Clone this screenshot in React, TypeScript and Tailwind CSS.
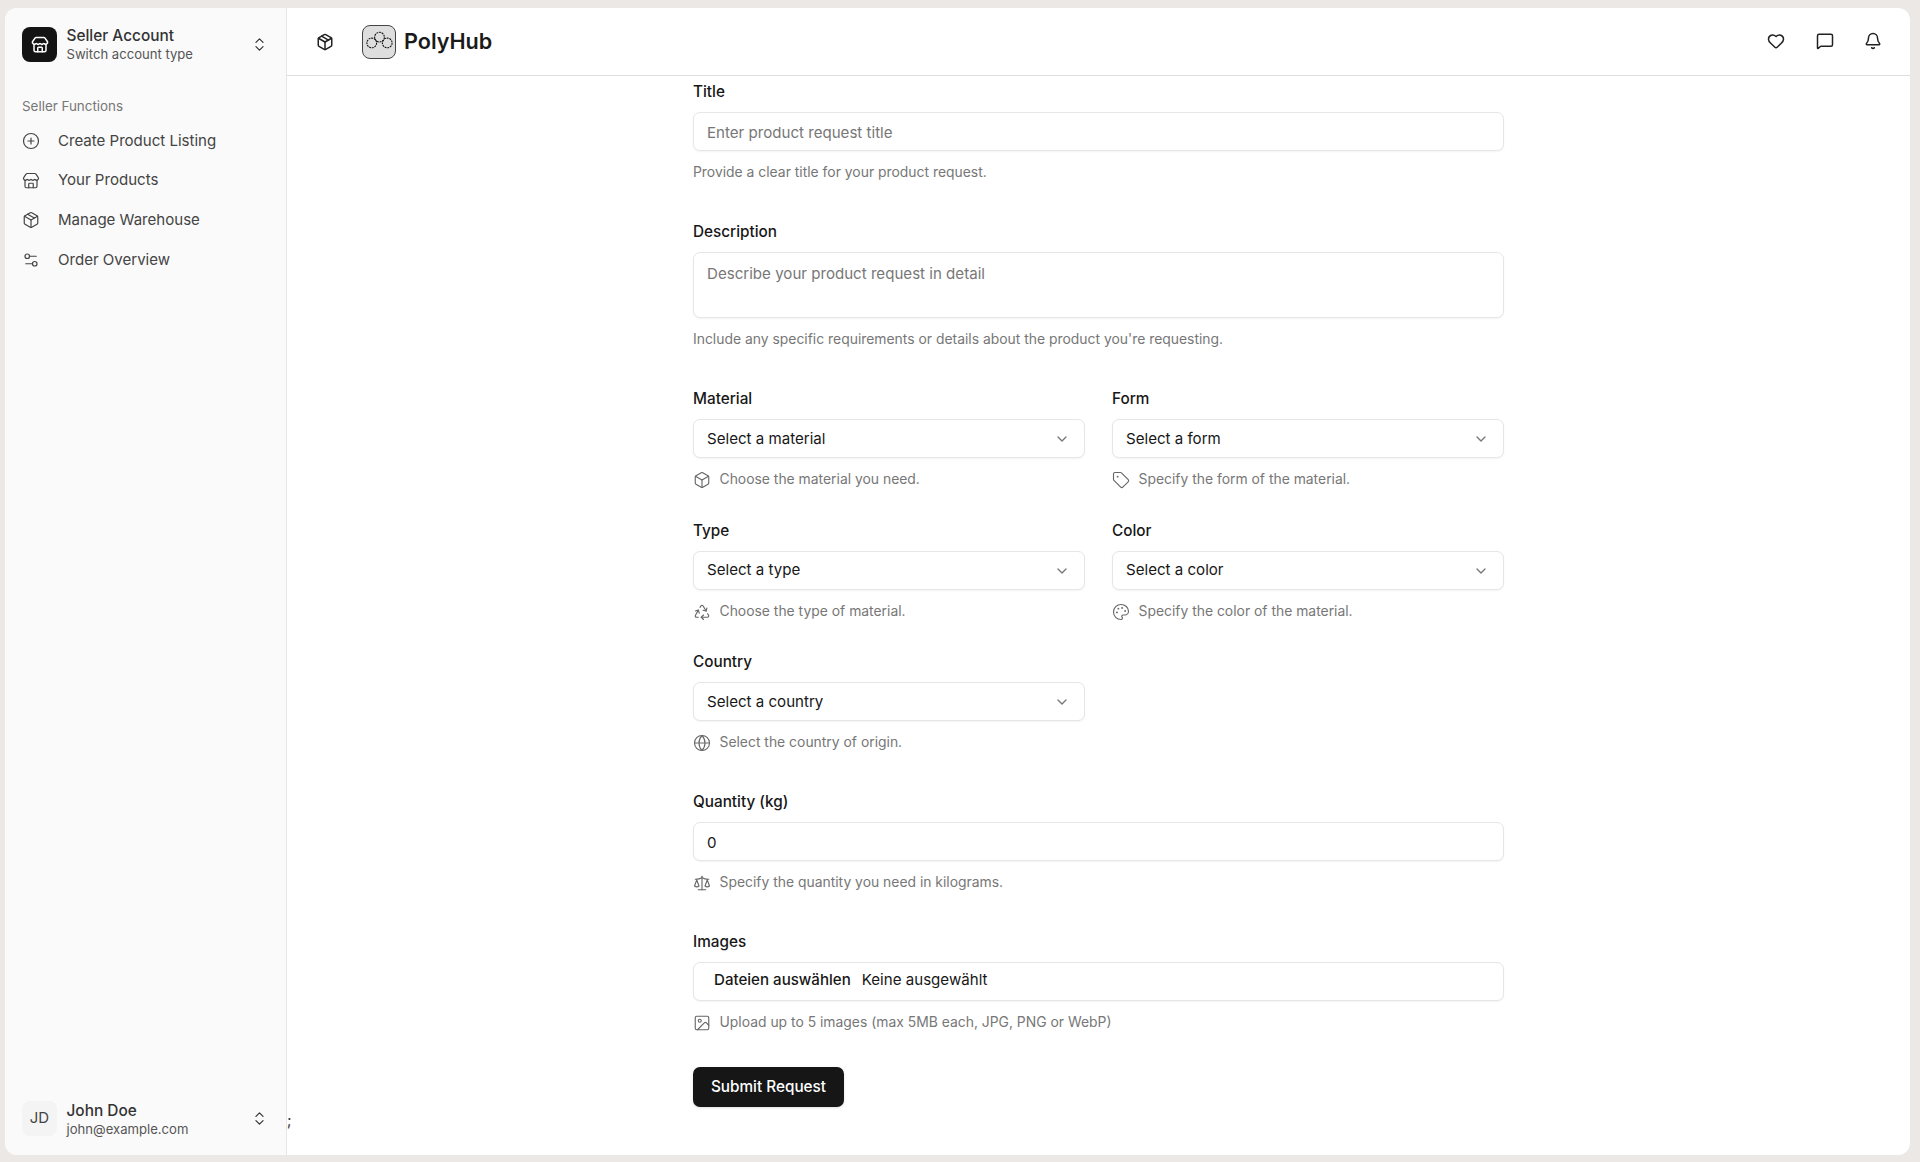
import type { ReactNode } from "react";
import {
  Bell,
  Box,
  ChevronDown,
  ChevronsUpDown,
  CirclePlus,
  Globe,
  Heart,
  Image,
  MessageSquare,
  Package,
  Palette,
  Recycle,
  Scale,
  Settings2,
  Store,
  Tag,
} from "lucide-react";

const NAV = [
  { label: "Create Product Listing", icon: CirclePlus },
  { label: "Your Products", icon: Store },
  { label: "Manage Warehouse", icon: Package },
  { label: "Order Overview", icon: Settings2 },
];

function Logo() {
  return (
    <div className="flex h-[34px] w-[34px] items-center justify-center rounded-[8px] border border-[#444] bg-[#dedede]">
      <svg viewBox="0 0 32 32" className="h-[31px] w-[31px]" fill="none" stroke="#111" strokeWidth="1.1" strokeDasharray="2 0.8">
        <circle cx="8" cy="17.5" r="5" />
        <circle cx="16" cy="11.5" r="5" />
        <circle cx="24" cy="17.5" r="5" />
      </svg>
    </div>
  );
}

function Sidebar() {
  return (
    <aside className="flex w-[282px] shrink-0 flex-col border-r border-[#e8e5e3] bg-[#fafafa]">
      <div className="flex items-center pl-[17px] pr-[18px] pt-[18px]">
        <div className="flex h-[35px] w-[35px] items-center justify-center rounded-[8px] bg-[#141414] text-white">
          <Store size={18} />
        </div>
        <div className="ml-[9.5px] mt-[1px] flex-1">
          <div className="text-[15.4px] leading-[18px] font-medium text-[#333]">Seller Account</div>
          <div className="text-[13.1px] leading-[18px] text-[#555]">Switch account type</div>
        </div>
        <ChevronsUpDown size={17} strokeWidth={1.7} className="text-[#333]" />
      </div>
      <div className="mt-[34px] pl-[17px] text-[13.4px] leading-[18px] text-[#777]">Seller Functions</div>
      <nav className="mt-[6px] flex flex-col">
        {NAV.map((n) => (
          <div key={n.label} className="flex h-[39.7px] items-center pl-[17px] text-[#444]">
            <n.icon size={18} strokeWidth={1.6} />
            <span className="ml-[18px] text-[15.05px]">{n.label}</span>
          </div>
        ))}
      </nav>
      <div className="mt-auto flex items-center pb-[17px] pl-[17px] pr-[18px]">
        <div className="flex h-[35px] w-[35px] items-center justify-center rounded-[8px] bg-[#f4f4f4] text-[15px] text-[#444]">
          JD
        </div>
        <div className="ml-[9.5px] mt-[3px] flex-1">
          <div className="text-[15.4px] leading-[18px] font-medium text-[#333]">John Doe</div>
          <div className="text-[13.1px] leading-[18px] text-[#555]">john@example.com</div>
        </div>
        <ChevronsUpDown size={17} strokeWidth={1.7} className="text-[#333]" />
      </div>
    </aside>
  );
}

function Header() {
  return (
    <header className="flex h-[68px] shrink-0 items-center border-b border-[#e0dddb] pl-[29px] pr-[28px]">
      <Package size={18} className="text-[#222]" />
      <div className="ml-[28px]">
        <Logo />
      </div>
      <span className="ml-[8px] text-[21.6px] font-semibold text-[#1a1a1a]">PolyHub</span>
      <div className="mb-[2px] ml-auto flex items-center gap-[30.5px] text-[#222]">
        <Heart size={18} />
        <MessageSquare size={18} />
        <Bell size={18} />
      </div>
    </header>
  );
}

function Label({ children }: { children: ReactNode }) {
  return <div className="text-[15.3px] leading-[18px] font-medium text-[#171717]">{children}</div>;
}

function Help({ icon: Icon, children }: { icon?: typeof Box; children: ReactNode }) {
  return (
    <div className="mt-[12px] flex h-[18px] items-center text-[13.9px] leading-[18px] text-[#777]">
      {Icon && <Icon size={18} strokeWidth={1.5} className="mr-[8.5px] mt-[2px] shrink-0 text-[#666]" />}
      {children}
    </div>
  );
}

const boxCls =
  "mt-[11px] flex h-[39px] w-full items-center rounded-[7px] border border-[#e8e5e3] bg-white px-[13px] text-[15.1px] shadow-xs";

function Select({ label, placeholder, help, icon }: { label: string; placeholder: string; help: string; icon: typeof Box }) {
  return (
    <div>
      <Label>{label}</Label>
      <button className={`${boxCls} justify-between pt-[1px] text-[#171717]`}>
        {placeholder}
        <ChevronDown size={16} className="mr-[1px] text-[#777]" />
      </button>
      <Help icon={icon}>{help}</Help>
    </div>
  );
}

function RequestForm() {
  return (
    <form className="mx-auto flex w-[811px] flex-col gap-[42px] pt-[7px]">
      <div>
        <Label>Title</Label>
        <input className={`${boxCls} pt-[1px] outline-none placeholder:text-[#777]`} placeholder="Enter product request title" />
        <Help>Provide a clear title for your product request.</Help>
      </div>
      <div>
        <Label>Description</Label>
        <textarea
          rows={2}
          className="mt-[11px] block h-[66px] w-full resize-none rounded-[7px] border border-[#e8e5e3] bg-white px-[13px] py-[11px] text-[15.1px] leading-[20px] shadow-xs outline-none placeholder:text-[#777]"
          placeholder="Describe your product request in detail"
        />
        <Help>Include any specific requirements or details about the product you're requesting.</Help>
      </div>
      <div className="grid grid-cols-2 gap-x-[27px] gap-y-[33.7px]">
        <Select label="Material" placeholder="Select a material" help="Choose the material you need." icon={Box} />
        <Select label="Form" placeholder="Select a form" help="Specify the form of the material." icon={Tag} />
        <Select label="Type" placeholder="Select a type" help="Choose the type of material." icon={Recycle} />
        <Select label="Color" placeholder="Select a color" help="Specify the color of the material." icon={Palette} />
        <Select label="Country" placeholder="Select a country" help="Select the country of origin." icon={Globe} />
      </div>
      <div>
        <Label>Quantity (kg)</Label>
        <input className={`${boxCls} pt-[1px] text-[#171717] outline-none`} defaultValue="0" />
        <Help icon={Scale}>Specify the quantity you need in kilograms.</Help>
      </div>
      <div>
        <Label>Images</Label>
        <div className={`${boxCls} pb-[3px] pl-[20px] text-[#171717]`}>
          <span className="font-medium">Dateien auswählen</span>
          <span className="ml-[11px]">Keine ausgewählt</span>
        </div>
        <Help icon={Image}>Upload up to 5 images (max 5MB each, JPG, PNG or WebP)</Help>
        <button className="mt-[36px] flex h-[40px] w-[151px] items-center justify-center rounded-[7px] bg-[#161616] text-[15.3px] font-medium text-white shadow-sm">
          Submit Request
        </button>
      </div>
    </form>
  );
}

export default function App() {
  return (
    <div className="h-[1162px] overflow-hidden bg-[#ebe8e5] pb-[7px] pl-[5px] pr-[10px] pt-[8px] font-['Inter',sans-serif]">
      <div className="flex h-full overflow-hidden rounded-[12px] bg-white">
        <Sidebar />
        <main className="relative flex min-w-0 flex-1 flex-col">
          <Header />
          <RequestForm />
          <span className="absolute bottom-[23px] left-[0px] text-[15px] text-[#333]">;</span>
        </main>
      </div>
    </div>
  );
}
